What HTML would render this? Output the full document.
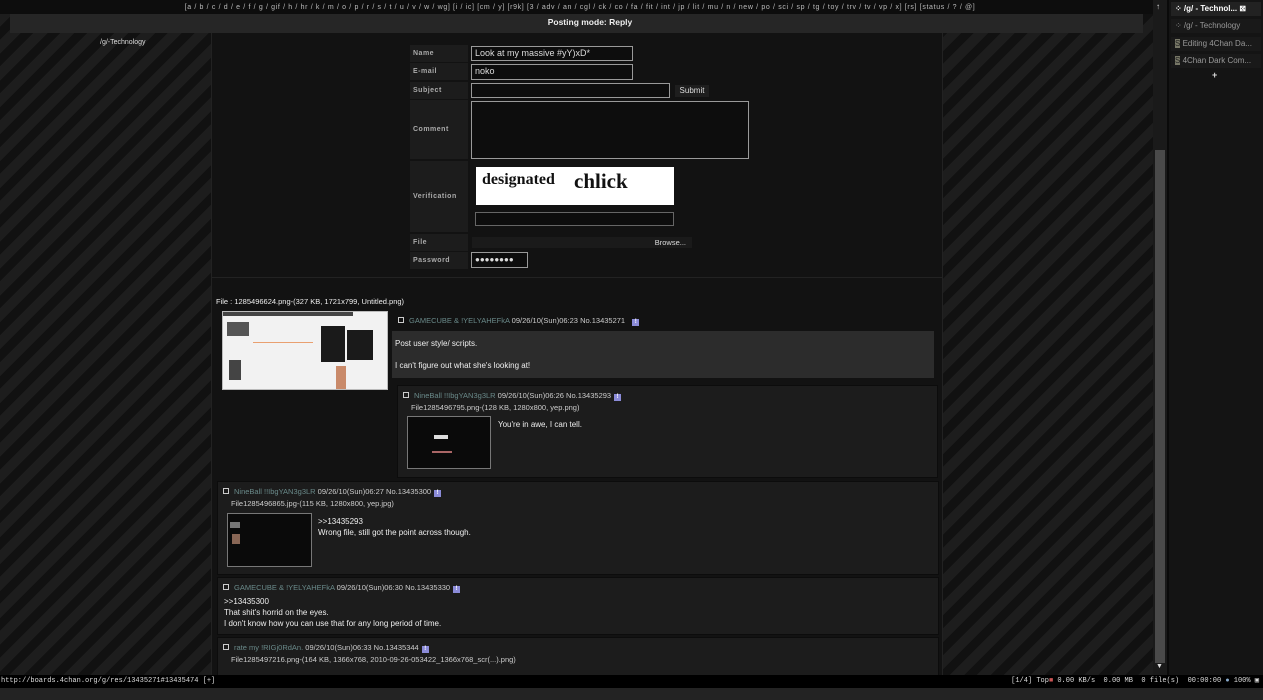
<!DOCTYPE html>
<html><head><meta charset="utf-8"><style>
*{margin:0;padding:0;box-sizing:border-box}
body{width:1263px;height:700px;overflow:hidden;background:#111;font-family:"Liberation Sans",sans-serif;font-size:8px;color:#ddd;position:relative}
.bg{position:absolute;left:0;top:0;width:1153px;height:675px;background:repeating-linear-gradient(135deg,#111 0 9px,#1d1d1d 9px 19px)}
.a{position:absolute}
.col{left:211px;top:33px;width:732px;height:642px;background:#121212;border-left:1px solid #222;border-right:1px solid #222}
.lbl{position:absolute;left:410px;width:58px;background:#1c1c1c;color:#aaa;font-weight:bold;font-size:7px;letter-spacing:.5px;padding-left:3px}
.inp{position:absolute;background:#0d0d0d;border:1px solid #999;color:#ddd;font-size:9px;padding-left:3px;line-height:13px}
.post{position:absolute;background:#1c1c1c;border:1px solid #0c0c0c}
.hd{position:absolute;font-size:7.5px;color:#ccc;white-space:nowrap}
.nm{color:#6a8a8a}
.cb{display:inline-block;width:6px;height:6px;border:1px solid #ccc;margin-right:5px;vertical-align:0}
.ex{display:inline-block;width:7px;height:7px;background:#8b8bd8;color:#fff;font-size:6px;text-align:center;line-height:7px;font-weight:bold;margin-left:3px}
.t{position:absolute;font-size:8px;color:#eee;white-space:nowrap;line-height:11px}
.th{position:absolute;background:#0a0a0a;border:1px solid #777;overflow:hidden}
</style></head><body>
<div class="bg"></div>
<div class="a" style="left:0;top:0;width:1153px;height:14px;background:#0d0d0d"></div>
<div class="a" style="left:0;top:4px;width:1160px;text-align:center;font-size:7px;color:#bbb;letter-spacing:.65px;white-space:nowrap">[a / b / c / d / e / f / g / gif / h / hr / k / m / o / p / r / s / t / u / v / w / wg] [i / ic] [cm / y] [r9k] [3 / adv / an / cgl / ck / co / fa / fit / int / jp / lit / mu / n / new / po / sci / sp / tg / toy / trv / tv / vp / x] [rs] [status / ? / @]</div>
<div class="a" style="left:10px;top:14px;width:1133px;height:19px;background:#262626"></div>
<div class="a" style="left:0;top:17px;width:1180px;text-align:center;font-weight:bold;font-size:8.5px;color:#eee">Posting mode: Reply</div>
<div class="a" style="left:100px;top:39px;font-size:7px;color:#ddd">/g/-Technology</div>
<div class="a col"></div>
<div class="a" style="left:212px;top:277px;width:730px;height:1px;background:#222"></div>

<div class="lbl" style="top:45px;height:17px;line-height:17px">Name</div>
<div class="inp" style="left:471px;top:46px;width:162px;height:15px">Look at my massive #yY)xD*</div>
<div class="lbl" style="top:63px;height:17px;line-height:17px">E-mail</div>
<div class="inp" style="left:471px;top:64px;width:162px;height:16px">noko</div>
<div class="lbl" style="top:82px;height:17px;line-height:17px">Subject</div>
<div class="inp" style="left:471px;top:83px;width:199px;height:15px"></div>
<div class="a" style="left:675px;top:85px;width:34px;height:12px;background:#1e1e1e;font-size:8px;color:#ddd;text-align:center;line-height:12px">Submit</div>
<div class="lbl" style="top:100px;height:59px;line-height:59px">Comment</div>
<div class="inp" style="left:471px;top:101px;width:278px;height:58px"></div>
<div class="lbl" style="top:161px;height:71px;line-height:71px">Verification</div>
<div class="a" style="left:476px;top:167px;width:198px;height:38px;background:#fff;font-family:'Liberation Serif',serif;color:#111;font-weight:bold"><span style="position:absolute;left:6px;top:4px;font-size:16px">designated</span><span style="position:absolute;left:98px;top:2px;font-size:21px">chlick</span></div>
<div class="inp" style="left:475px;top:212px;width:199px;height:14px;border-color:#666"></div>
<div class="lbl" style="top:234px;height:17px;line-height:17px">File</div>
<div class="a" style="left:472px;top:237px;width:220px;height:11px;background:#1a1a1a;font-size:7.5px;color:#ddd;text-align:right;padding-right:6px;line-height:11px">Browse...</div>
<div class="lbl" style="top:252px;height:17px;line-height:17px">Password</div>
<div class="inp" style="left:471px;top:252px;width:57px;height:16px;font-size:8px">●●●●●●●●</div>

<div class="t" style="left:216px;top:296px;font-size:7.5px">File : 1285496624.png-(327 KB, 1721x799, Untitled.png)</div>
<div class="a" style="left:222px;top:311px;width:166px;height:79px;background:#f2f2f2;border:1px solid #bbb;overflow:hidden">
 <div class="a" style="left:0;top:0;width:130px;height:4px;background:#444"></div>
 <div class="a" style="left:4px;top:10px;width:22px;height:14px;background:#555"></div>
 <div class="a" style="left:98px;top:14px;width:24px;height:36px;background:#1a1a1a"></div>
 <div class="a" style="left:124px;top:18px;width:26px;height:30px;background:#1a1a1a"></div>
 <div class="a" style="left:6px;top:48px;width:12px;height:20px;background:#444"></div>
 <div class="a" style="left:113px;top:54px;width:10px;height:24px;background:#c98a6a"></div>
 <div class="a" style="left:30px;top:30px;width:60px;height:1px;background:#e9a070"></div>
</div>
<div class="hd" style="left:398px;top:316px"><span class="cb"></span><span class="nm">GAMECUBE &amp; !YELYAHEFkA</span> 09/26/10(Sun)06:23 No.13435271 &nbsp;<span class="ex">!</span></div>
<div class="a" style="left:392px;top:331px;width:542px;height:47px;background:#2c2c2c"></div>
<div class="t" style="left:395px;top:338px">Post user style/ scripts.</div>
<div class="t" style="left:395px;top:360px">I can't figure out what she's looking at!</div>

<div class="post" style="left:397px;top:385px;width:541px;height:93px"></div>
<div class="hd" style="left:403px;top:391px"><span class="cb"></span><span class="nm">NineBall !!IbgYAN3g3LR</span> 09/26/10(Sun)06:26 No.13435293<span class="ex">!</span></div>
<div class="hd" style="left:411px;top:403px">File1285496795.png-(128 KB, 1280x800, yep.png)</div>
<div class="th" style="left:407px;top:416px;width:84px;height:53px"><div class="a" style="left:26px;top:18px;width:14px;height:4px;background:#ddd"></div><div class="a" style="left:24px;top:34px;width:20px;height:2px;background:#a66"></div></div>
<div class="t" style="left:498px;top:419px">You're in awe, I can tell.</div>

<div class="post" style="left:217px;top:481px;width:722px;height:94px"></div>
<div class="hd" style="left:223px;top:487px"><span class="cb"></span><span class="nm">NineBall !!IbgYAN3g3LR</span> 09/26/10(Sun)06:27 No.13435300<span class="ex">!</span></div>
<div class="hd" style="left:231px;top:499px">File1285496865.jpg-(115 KB, 1280x800, yep.jpg)</div>
<div class="th" style="left:227px;top:513px;width:85px;height:54px"><div class="a" style="left:2px;top:8px;width:10px;height:6px;background:#777"></div><div class="a" style="left:4px;top:20px;width:8px;height:10px;background:#865"></div></div>
<div class="t" style="left:318px;top:516px">&gt;&gt;13435293</div>
<div class="t" style="left:318px;top:527px">Wrong file, still got the point across though.</div>

<div class="post" style="left:217px;top:577px;width:722px;height:58px"></div>
<div class="hd" style="left:223px;top:583px"><span class="cb"></span><span class="nm">GAMECUBE &amp; !YELYAHEFkA</span> 09/26/10(Sun)06:30 No.13435330<span class="ex">!</span></div>
<div class="t" style="left:224px;top:596px">&gt;&gt;13435300</div>
<div class="t" style="left:224px;top:607px">That shit's horrid on the eyes.</div>
<div class="t" style="left:224px;top:618px">I don't know how you can use that for any long period of time.</div>

<div class="post" style="left:217px;top:637px;width:722px;height:40px"></div>
<div class="hd" style="left:223px;top:643px"><span class="cb"></span><span class="nm">rate my !RIGj0RdAn.</span> 09/26/10(Sun)06:33 No.13435344<span class="ex">!</span></div>
<div class="hd" style="left:231px;top:655px">File1285497216.png-(164 KB, 1366x768, 2010-09-26-053422_1366x768_scr(...).png)</div>

<div class="a" style="left:1153px;top:0;width:14px;height:675px;background:#1a1a1a"></div>
<div class="a" style="left:1155px;top:150px;width:10px;height:513px;background:#4a4a4a"></div>
<div class="a" style="left:1156px;top:2px;font-size:8px;color:#ddd">↑</div>
<div class="a" style="left:1156px;top:663px;font-size:7px;color:#ddd">▼</div>
<div class="a" style="left:1167px;top:0;width:96px;height:675px;background:#141414;border-left:2px solid #0a0a0a"></div>
<div class="a" style="left:1171px;top:2px;width:90px;height:14px;background:#222;font-size:8px;font-weight:bold;color:#fff;line-height:14px;padding-left:4px">⁘ /g/ - Technol... <span style="font-size:8px">⊠</span></div>
<div class="a" style="left:1171px;top:19px;width:90px;height:14px;background:#191919;font-size:8px;color:#999;line-height:14px;padding-left:4px">⁘ /g/ - Technology</div>
<div class="a" style="left:1171px;top:37px;width:90px;height:14px;background:#191919;font-size:8px;color:#999;line-height:14px;padding-left:4px"><span style="background:#776;color:#222">S</span> Editing 4Chan Da...</div>
<div class="a" style="left:1171px;top:54px;width:90px;height:14px;background:#191919;font-size:8px;color:#999;line-height:14px;padding-left:4px"><span style="background:#776;color:#222">S</span> 4Chan Dark Com...</div>
<div class="a" style="left:1212px;top:70px;font-size:9px;color:#ddd;font-weight:bold">+</div>

<div class="a" style="left:0;top:675px;width:1263px;height:13px;background:#000;font-family:'Liberation Mono',monospace;font-size:7px;color:#ddd;line-height:13px;padding-left:1px">http://boards.4chan.org/g/res/13435271#13435474 [+]<span style="position:absolute;right:4px;top:0">[1/4] Top<span style="color:#c55">■</span> 0.00 KB/s &nbsp;0.00 MB &nbsp;0 file(s) &nbsp;00:00:00 <span style="color:#8ac">●</span> 100% ▣</span></div>
<div class="a" style="left:0;top:688px;width:1263px;height:12px;background:#232323"></div>
</body></html>
